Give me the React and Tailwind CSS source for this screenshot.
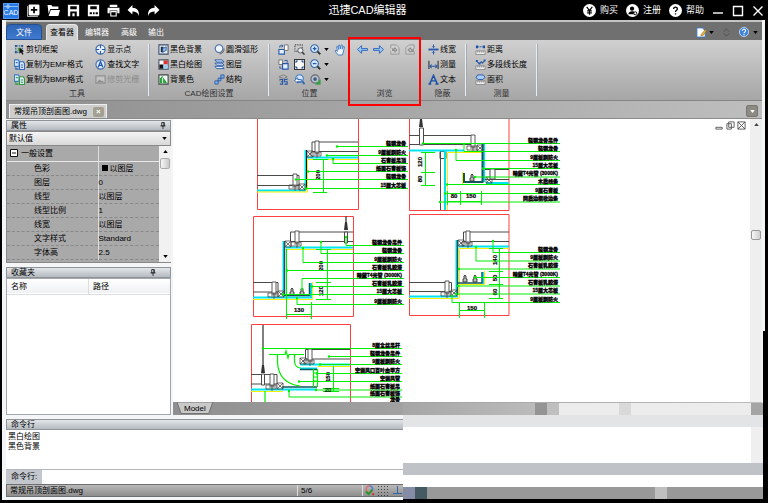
import clsx from 'clsx';

/* ---------- icons ---------- */

function Icon({ children, className = 'w-[11px] h-[11px]' }) {
  return (
    <svg viewBox="0 0 12 12" className={clsx('shrink-0', className)} fill="none" stroke="#2558a8" strokeWidth="1.2">
      {children}
    </svg>
  );
}

const Pages = ({ tint }) => (
  <Icon>
    <path d="M0.5 1h4l1 1v6h-5z" fill="#dcebfb" stroke="#3f7cc4" />
    <path d="M6 3h4l1.500 2v6.500H6z" fill="#dcebfb" stroke={tint} />
    <path d="M2 4h2M7.500 6.500H10M7.500 9H10M2 8v3h3" stroke={tint} />
  </Icon>
);

const Ruler = ({ children }) => (
  <Icon>
    <path d="M1 7.5h10v4H1z" fill="#eee" stroke="#777" strokeWidth="0.8" />
    <path d="M3 7.5v2M5 7.5v2M7 7.5v2M9 7.5v2" stroke="#777" strokeWidth="0.7" />
    {children}
  </Icon>
);

const Lens = ({ children }) => (
  <Icon>
    <circle cx="5" cy="5" r="4.200" fill="#d8e9fb" stroke="#3569ad" />
    <path d="M8 8l3.2 3.2" stroke="#333" strokeWidth="2" />
    {children}
  </Icon>
);

const ICONS = {
  frame: (
    <Icon>
      <path d="M2 2h7v7H2z" stroke="#28609c" strokeDasharray="2 1" />
      <path d="M1 1h2v2H1zM8 1h2v2H8zM1 8h2v2H1z" fill="#1c4f94" stroke="none" />
      <path d="M4 4h4v4H4z" fill="#56a64c" stroke="none" />
      <path d="M6 4l5 4-2 .4 1.4 2.6-1.4.6-1.3-2.5L6 10.500z" fill="#111" stroke="none" />
    </Icon>
  ),
  emf: <Pages tint="#2f66b8" />,
  bmp: <Pages tint="#2f9a3d" />,
  point: (
    <Icon>
      <circle cx="6" cy="6" r="5" fill="#eaf2fc" stroke="#456ea8" />
      <path d="M6 1v3.500M6 7.500V11M1 6h3.500M7.500 6H11" />
    </Icon>
  ),
  findText: (
    <Icon>
      <circle cx="6" cy="6" r="5" fill="#dcebfb" stroke="#456ea8" />
      <path d="M3.500 9L6 2.800 8.500 9M4.500 7h3" strokeWidth="1.400" />
    </Icon>
  ),
  raster: (
    <Icon>
      <path d="M1 2h10v8H1z" fill="#c4c4c4" stroke="#8e8e8e" />
      <path d="M2 9l3-3 2 2 1-1 2 2z" fill="#8a8a8a" stroke="none" />
    </Icon>
  ),
  blackBg: (
    <Icon>
      <path d="M1 1h10v10H1z" fill="#e8f1fb" stroke="#3c4f6b" />
      <path d="M3 3h3v6H3z" fill="#1b2c47" stroke="none" />
      <path d="M5 9V5l4-2v4z" fill="#8fb9ea" stroke="#234a80" strokeWidth="0.800" />
    </Icon>
  ),
  blackWhite: (
    <Icon>
      <path d="M1 1h10v10H1z" fill="#fff" stroke="#456" />
      <path d="M6 1.500h4.500V6H6z" fill="#d33" stroke="none" />
      <path d="M1.500 6H6v4.500H1.500z" fill="#111" stroke="none" />
      <path d="M6 6h4.500v4.500H6z" fill="#9fd0f5" stroke="none" />
    </Icon>
  ),
  bgColor: (
    <Icon>
      <path d="M1 1h10v10H1z" fill="#eff7ff" stroke="#444" />
      <path d="M2 10V5l3-3 5 8z" fill="#2fa23c" stroke="none" />
      <path d="M5 3l5 5M5 4v6" stroke="#fff" strokeWidth="0.900" />
    </Icon>
  ),
  arc: (
    <Icon>
      <circle cx="5.500" cy="5" r="4.200" fill="#f2f7fd" stroke="#456ea8" />
      <path d="M11 5a6 6 0 01-5 6" stroke="#777" />
    </Icon>
  ),
  layers: (
    <Icon>
      <path d="M1 1h8l2 2.300H3zM1 4.500h8l2 2.300H3zM1 8h8l2 2.500H3z" fill="#e2effc" strokeWidth="1" />
    </Icon>
  ),
  structure: (
    <Icon>
      <path d="M3 9l6-6" />
      <path d="M7.500 1H11v3.500H7.500zM1 7.500h3.500V11H1zM4.500 4.500h3v3h-3z" fill="#7eb0ea" strokeWidth="0.900" />
    </Icon>
  ),
  rotL: (
    <Icon>
      <path d="M1 6h6v5H1z" fill="#e4f0fd" />
      <path d="M7 1h4v6H7z" fill="#fafafa" stroke="#666" strokeWidth="0.900" />
      <path d="M2 4V2h3M4 0.800L5.500 2 4 3.500" strokeWidth="1" />
    </Icon>
  ),
  rotR: (
    <Icon>
      <path d="M1 1h4v5H1z" fill="#fafafa" stroke="#666" strokeWidth="0.900" />
      <path d="M5 5h6v6H5z" fill="#e4f0fd" />
      <path d="M7 1.500h3V4M2 8v2h2" strokeWidth="1" />
    </Icon>
  ),
  view35: (
    <Icon>
      <path d="M1 3l5-2 4 2-4 2zM2 5v3M10 4v3" stroke="#777" strokeWidth="0.900" />
      <path d="M2 6h3v5H2M3 8.500h2M10 6H7v2.500h3V11H7" />
    </Icon>
  ),
  zoomWin: (
    <Icon>
      <path d="M1 1h8v7H1z" stroke="#555" strokeDasharray="1.500 1" />
      <circle cx="7" cy="7" r="2.800" fill="#e4eefa" stroke="#555" strokeWidth="1" />
      <path d="M9 9l2.500 2.500" stroke="#333" strokeWidth="1.600" />
    </Icon>
  ),
  fit: (
    <Icon>
      <path d="M0.500 0.500h11v11H0.500z" fill="#f7f7f7" stroke="#333" />
      <path d="M2 4V2h2zM8 2h2v2zM2 8v2h2zM10 8v2H8z" fill="#1c4f94" stroke="#1c4f94" strokeWidth="0.600" />
    </Icon>
  ),
  zoomPrev: (
    <Icon>
      <circle cx="6" cy="5" r="4.200" fill="#d8e9fb" stroke="#3f7cc4" />
      <path d="M9 8l2.500 3" stroke="#3569ad" strokeWidth="2" />
      <path d="M1 7l3-3v2h4v2H4v2z" fill="#fff" strokeWidth="0.900" />
    </Icon>
  ),
  zoomIn: <Lens><path d="M3 5h4M5 3v4" strokeWidth="1.400" /></Lens>,
  zoomOut: <Lens><path d="M3 5h4" strokeWidth="1.400" /></Lens>,
  zoomAll: (
    <Icon>
      <circle cx="5.500" cy="5.500" r="4.500" fill="#b9c4cc" stroke="#667" />
      <circle cx="5.500" cy="5.500" r="2" fill="#3c5c86" stroke="none" />
      <path d="M7 11l4-4v4z" fill="#35a43f" stroke="#35a43f" />
    </Icon>
  ),
  hand: (
    <Icon className="w-[12px] h-[12px]">
      <path
        d="M4 11L1 7l1-.8L3.500 7.500 2.600 2.600l1-.3L4.800 5.500 4.700 1.200h1.200L6.400 5l.8-4 1.100.2-.1 4 1.300-2.800 1 .5L9.300 8l-.8 3z"
        fill="#eef5fd"
        stroke="#3f78c0"
        strokeWidth="0.900"
      />
    </Icon>
  ),
  back: (
    <Icon>
      <path d="M0.500 6L5 1.800V5h6.500v2H5v3.200z" fill="#9cc6f3" stroke="#2c66b8" strokeWidth="1" />
    </Icon>
  ),
  forward: (
    <Icon>
      <path d="M11.500 6L7 1.800V5H0.500v2H7v3.200z" fill="#9cc6f3" stroke="#2c66b8" strokeWidth="1" />
    </Icon>
  ),
  turnL: (
    <Icon>
      <path d="M2 5V1h6l3 3v7H2V8" fill="#cfcfcf" stroke="#929292" strokeWidth="0.900" />
      <path d="M6 9l2.500-2.500L6.500 4.500 4 7M4 4.500V7h2.500" stroke="#8c8c8c" />
    </Icon>
  ),
  turnR: (
    <Icon>
      <path d="M10 5V1H4L1 4v7h9V8" fill="#cfcfcf" stroke="#929292" strokeWidth="0.900" />
      <path d="M6 9L3.500 6.500l2-2L9 8M9 5v3H6" stroke="#8c8c8c" />
    </Icon>
  ),
  lineWidth: (
    <Icon>
      <path d="M0.500 6h11" strokeWidth="2" />
      <path d="M6 0.500v3.500M4.500 2.500L6 4l1.500-1.500M6 11.500V8M4.500 9.500L6 8l1.500 1.500" strokeWidth="1" />
    </Icon>
  ),
  measure: (
    <Icon>
      <path d="M1 2v9M11 2v9" stroke="#333" />
      <path d="M2 8h8M4 6L2 8l2 2M8 6l2 2-2 2" strokeWidth="1.100" />
    </Icon>
  ),
  text: (
    <Icon>
      <path d="M2 10.500L6 1.500l4 9M3.500 7.500h5M0.500 11h3M8 11h3.500" stroke="#1d52a8" strokeWidth="1.600" />
    </Icon>
  ),
  distance: (
    <Ruler>
      <path d="M2 3h8" strokeDasharray="2 1" />
      <path d="M1 1.500h2.500v3H1zM8.500 1.500H11v3H8.500z" fill="#1d52a8" stroke="none" />
    </Ruler>
  ),
  polyline: (
    <Ruler>
      <path d="M1.500 2l3 3L7 3l1 1.500 3-3" />
      <path d="M1 1h2v2H1zM4 4h2v2H4zM9.500 0.500h2v2h-2z" fill="#1d52a8" stroke="none" />
    </Ruler>
  ),
  area: (
    <Ruler>
      <path d="M1 4l2-3h6l2 2.500L8.500 6h-5z" fill="#a9cdf4" strokeWidth="1" />
    </Ruler>
  ),
};

const QUICK = [
  {
    name: '新建',
    art: (
      <>
        <rect x="1.500" y="0.500" width="10" height="10" rx="1" fill="#fff" />
        <path d="M6.500 2.500v6M3.500 5.500h6" stroke="#000" strokeWidth="1.600" />
        <path d="M0.500 2v9.500H10" stroke="#bbb" strokeWidth="0.900" fill="none" />
      </>
    ),
  },
  { name: '打开', art: <path d="M0.500 1H4l1 1.200h5.500v2.300H3L1.500 9zM3.500 5.500H12L10.500 11H1.500z" fill="#fff" /> },
  {
    name: '保存',
    art: <path d="M0.800.8h10.400v10.400H.8zM3 2v2.800h6V2zM3 7v4.200h2V8.500h2v2.700h2V7z" fill="#fff" fillRule="evenodd" />,
  },
  {
    name: '另存为',
    art: (
      <>
        <path d="M0.800.8h10.400v10.400H.8zM3 2v2.800h6V2z" fill="#fff" fillRule="evenodd" />
        <path d="M2.500 8.500h2M5.500 8.500h1.500M8 8.500h2" stroke="#000" strokeWidth="2" />
      </>
    ),
  },
  {
    name: '打印',
    art: (
      <>
        <path d="M2.500.8h7v2h-7zM0.500 3.500h11v5H9.500V6h-7v2.500h-2z" fill="#fff" />
        <path d="M3.500 7h5v4h-5z" stroke="#fff" fill="none" />
      </>
    ),
  },
  { name: '撤销', art: <path d="M5 1v2.500c4 0 6.500 2.500 6 7.500-1-3-3-4-6-4v2.800L0.500 5.500z" fill="#fff" /> },
  { name: '重做', art: <path d="M7 1v2.500c-4 0-6.500 2.500-6 7.500 1-3 3-4 6-4v2.800l4.500-4.300z" fill="#fff" /> },
];

const Caret = ({ className }) => (
  <svg viewBox="0 0 6 4" className={clsx('w-[5px] h-[3px] shrink-0', className)}>
    <path d="M0 0h6L3 4z" fill="currentColor" />
  </svg>
);

const Pin = () => (
  <svg viewBox="0 0 7 8" className="w-[6px] h-[7px]" fill="none" stroke="#222">
    <path d="M2 0.500h3v4H2zM0.500 4.500h6M3.500 5v3M4.500 1v3" />
  </svg>
);

/* ---------- title bar ---------- */

function Account({ label, children }) {
  return (
    <button className="flex items-center gap-1">
      <svg viewBox="0 0 14 14" className="w-[13px] h-[13px]">
        <circle cx="7" cy="7" r="7" fill="#fff" />
        {children}
      </svg>
      <span className="text-[9px]">{label}</span>
    </button>
  );
}

function TitleBar() {
  return (
    <header className="h-5 shrink-0 flex items-center bg-black text-white pt-px">
      <div className="flex-1 flex items-center pl-[3px]">
        <div className="w-4 h-4 mr-2 bg-[#2878e6] border border-[#4f9af5] flex flex-col items-center">
          <svg viewBox="0 0 14 5" className="w-[14px] h-[5px]" fill="none" stroke="#a9cffb" strokeWidth="0.800">
            <circle cx="4" cy="2.500" r="1.500" />
            <path d="M0 2.500h14M4 0v5" />
          </svg>
          <span className="text-[7px] leading-[8px]">CAD</span>
        </div>
        <div className="flex gap-[7px]">
          {QUICK.map((q) => (
            <button key={q.name} aria-label={q.name}>
              <svg viewBox="0 0 12 12" className="w-[13px] h-[13px]">{q.art}</svg>
            </button>
          ))}
        </div>
      </div>
      <h1 className="text-[11px] pr-8">迅捷CAD编辑器</h1>
      <div className="flex-1 flex items-center justify-end gap-2 pr-1">
        <Account label="购买">
          <path d="M4 3l3 4 3-4M7 7v4.500M4.500 7.500h5M4.500 9.500h5" stroke="#000" strokeWidth="1.300" fill="none" />
        </Account>
        <Account label="注册">
          <circle cx="6.500" cy="5" r="2.300" fill="#000" />
          <path d="M2.500 11c0-4 6-4 7-2v2z" fill="#000" />
          <circle cx="10" cy="10" r="1.600" fill="#fff" stroke="#000" />
        </Account>
        <Account label="帮助">
          <path d="M5 5.500c0-3 4.300-2.500 4 0-.2 1.300-2 1.300-2 3M7 10v1.300" stroke="#000" strokeWidth="1.400" fill="none" />
        </Account>
        <div className="flex gap-2">
          {['M1 8h10', 'M1.500 1.500h9v9h-9z', 'M1.500 1.500l9 9M10.500 1.500l-9 9'].map((d, i) => (
            <button key={d} aria-label={['最小化', '最大化', '关闭'][i]}>
              <svg viewBox="0 0 12 12" className="w-3 h-3" fill="none" stroke="#fff" strokeWidth="1.400">
                <path d={d} />
              </svg>
            </button>
          ))}
        </div>
      </div>
    </header>
  );
}

/* ---------- ribbon ---------- */

function TabRow() {
  return (
    <nav className="h-5 shrink-0 flex items-end bg-[#707070] border-t-2 border-[#c4c4c4] text-white">
      <button className="w-9 h-4 rounded-t-sm bg-linear-to-b from-[#2f63b4] to-[#3f7bd0] border border-[#234f93]">文件</button>
      <button className="w-8 h-4 ml-1 mr-1 rounded-t-sm bg-[#cfcfcf] border border-b-0 border-[#e8e8e8] text-black">查看器</button>
      <button className="h-4 px-[3px]">编辑器</button>
      <button className="h-4 px-[9px]">高级</button>
      <button className="h-4 px-[2px]">输出</button>
      <div className="ml-auto flex items-center h-4 gap-1 pr-1 text-black">
        <button className="flex items-center gap-[2px]" aria-label="样式">
          <svg viewBox="0 0 12 12" className="w-[11px] h-[11px]">
            <path d="M1 1h6l3 3v7H1z" fill="#fff" stroke="#3b78c6" />
            <path d="M5 9l5-6 1.500 1.200L7 10z" fill="#f0b52e" stroke="#85601a" strokeWidth="0.600" />
          </svg>
          <Caret />
        </button>
        <svg viewBox="0 0 10 10" className="w-[9px] h-[9px] mx-1" fill="none" stroke="#4d4d4d">
          <path d="M2 4l3-3 3 3M2 6l3 3 3-3" />
        </svg>
        <button className="flex items-center gap-1" aria-label="帮助主题">
          <svg viewBox="0 0 12 12" className="w-[10px] h-[10px]">
            <circle cx="6" cy="6" r="5.500" fill="#3d82dc" stroke="#cfe2fa" />
            <path d="M4 4.500c0-2.500 4-2.300 4 0C8 6 6 6 6 7.500M6 8.500v1.300" stroke="#fff" strokeWidth="1.300" fill="none" />
          </svg>
          <Caret />
        </button>
      </div>
    </nav>
  );
}

function Tool({ icon, label, caret, disabled }) {
  return (
    <button disabled={disabled} aria-label={label || icon} className="h-[15px] flex items-center gap-px text-left whitespace-nowrap disabled:text-[#8c8c8c]">
      {ICONS[icon]}
      {label && <span>{label}</span>}
      {caret && <Caret className="ml-[2px]" />}
    </button>
  );
}

function Group({ title, className, gridClass, children }) {
  return (
    <section className={clsx('shrink-0 flex flex-col pt-[2px]', className)}>
      <div className={clsx('grid grid-flow-col grid-rows-3 h-[45px] justify-start', gridClass)}>{children}</div>
      <h2 className="mt-[2px] text-center text-[#333] leading-[10px]">{title}</h2>
    </section>
  );
}

const Divider = () => <div className="w-[2px] my-1 shrink-0 bg-[#e9edf2] border-r border-[#a3a9b1]" />;

function Ribbon() {
  return (
    <div className="h-[61px] shrink-0 flex bg-linear-to-b from-[#d0d0d0] to-[#a6a6a6] border-b border-[#858585]">
      <Group title="工具" className="w-[142px]" gridClass="pl-2 gap-x-[12px]">
        <Tool icon="frame" label="剪切框架" />
        <Tool icon="emf" label="复制为EMF格式" />
        <Tool icon="bmp" label="复制为BMP格式" />
        <Tool icon="point" label="显示点" />
        <Tool icon="findText" label="查找文字" />
        <Tool icon="raster" label="修剪光栅" disabled />
      </Group>
      <Divider />
      <Group title="CAD绘图设置" className="w-[118px]" gridClass="pl-2 gap-x-[12px]">
        <Tool icon="blackBg" label="黑色背景" />
        <Tool icon="blackWhite" label="黑白绘图" />
        <Tool icon="bgColor" label="背景色" />
        <Tool icon="arc" label="圆滑弧形" />
        <Tool icon="layers" label="图层" />
        <Tool icon="structure" label="结构" />
      </Group>
      <Divider />
      <Group title="位置" className="w-[79px]" gridClass="pl-2 gap-x-[5px]">
        <Tool icon="rotL" />
        <Tool icon="rotR" />
        <Tool icon="view35" />
        <Tool icon="zoomWin" />
        <Tool icon="fit" />
        <Tool icon="zoomPrev" />
        <Tool icon="zoomIn" caret />
        <Tool icon="zoomOut" caret />
        <Tool icon="zoomAll" caret />
        <Tool icon="hand" />
      </Group>
      <div className="relative shrink-0 flex">
        <Group title="浏览" className="w-[71px]" gridClass="pl-2 gap-x-[5px]">
          <Tool icon="back" />
          <span className="row-span-2" />
          <Tool icon="forward" />
          <span className="row-span-2" />
          <Tool icon="turnL" disabled />
          <span className="row-span-2" />
          <Tool icon="turnR" disabled />
        </Group>
        <div className="absolute -left-px -right-px -top-[3px] h-[69px] border-2 border-[#f00]" />
      </div>
      <Group title="隐蔽" className="w-[45px]" gridClass="pl-2">
        <Tool icon="lineWidth" label="线宽" />
        <Tool icon="measure" label="测量" />
        <Tool icon="text" label="文本" />
      </Group>
      <Divider />
      <Group title="测量" className="w-[69px]" gridClass="pl-2">
        <Tool icon="distance" label="距离" />
        <Tool icon="polyline" label="多段线长度" />
        <Tool icon="area" label="面积" />
      </Group>
      <Divider />
    </div>
  );
}

function DocTabs() {
  return (
    <div className="h-[18px] shrink-0 flex items-end justify-between pl-[3px] pr-1 bg-linear-to-r from-[#8f8f8f] to-[#bebebe] border-b border-[#8b8b8b]">
      <div className="h-[14px] flex items-center gap-[6px] pl-1 pr-[2px] bg-[#cdcdcd] border border-b-0 border-[#eee]">
        <span>常规吊顶剖面图.dwg</span>
        <button aria-label="关闭文档" className="w-[11px] h-[10px] bg-[#a3a091] rounded-[2px] text-white font-bold leading-[9px]">×</button>
      </div>
      <button aria-label="文档列表" className="w-3 h-3 mb-px rounded-[2px] bg-[#8b8b83] border border-[#77776f] flex items-center justify-center text-white">
        <Caret />
      </button>
    </div>
  );
}

/* ---------- side panels ---------- */

function PanelHead({ title, pin, className }) {
  return (
    <div className={clsx('h-[11px] shrink-0 flex items-center justify-between pl-1 bg-linear-to-b from-[#e3e6e9] to-[#b4bac0] border border-[#8f9499] leading-[9px]', className)}>
      <h2>{title}</h2>
      {pin && <Pin />}
    </div>
  );
}

const PROPS = [
  ['色彩', '以图层'],
  ['图层', '0'],
  ['线型', '以图层'],
  ['线型比例', '1'],
  ['线宽', '以图层'],
  ['文字样式', 'Standard'],
  ['字体高', '2.5'],
];

function Properties() {
  return (
    <section className="shrink-0 pt-px">
      <PanelHead title="属性" pin className="pr-1" />
      <div className="relative">
        <select aria-label="对象" className="block w-full h-[15px] pl-[2px] appearance-none bg-linear-to-b from-[#f5f5f5] to-[#d9d9d9] border border-[#888]">
          <option>默认值</option>
        </select>
        <Caret className="absolute right-1 top-[6px] pointer-events-none" />
      </div>
      <div className="flex h-[117px] border-b border-l border-[#888]">
        <div className="flex-1 bg-[#a9a9a9]">
          <table className="w-full table-fixed border-collapse">
            <colgroup>
              <col className="w-[91px]" />
              <col />
            </colgroup>
            <tbody>
              <tr className="h-[15px] border-b border-[#e8e8e8]">
                <th className="p-0 pl-[3px] border-r border-[#ddd] text-left font-normal">
                  <span className="flex items-center gap-[3px]">
                    <svg viewBox="0 0 8 8" className="w-2 h-2" stroke="#111">
                      <path d="M0.500 0.500h7v7h-7zM2 4h4" fill="#fff" />
                    </svg>
                    一般设置
                  </span>
                </th>
                <td />
              </tr>
              {PROPS.map(([name, value], i) => (
                <tr key={name} className="h-[14px] border-b border-dashed border-[#888]">
                  <th className="p-0 pl-[27px] border-r border-solid border-r-[#ddd] text-left font-normal">{name}</th>
                  <td className="p-0">
                    <span className="flex items-center gap-[2px]">
                      {i === 0 && <i className="w-[6px] h-[6px] ml-[3px] bg-black" />}
                      {value}
                    </span>
                  </td>
                </tr>
              ))}
            </tbody>
          </table>
        </div>
        <div className="w-3 bg-[#f1f1f1] flex flex-col items-center py-1">
          <Caret className="rotate-180" />
          <div className="mt-[5px] w-[10px] h-[11px] rounded-[2px] bg-linear-to-r from-[#f6f6f6] to-[#c9c9c9] border border-[#aaa]" />
          <Caret className="mt-auto" />
        </div>
      </div>
    </section>
  );
}

function Favourites() {
  return (
    <section className="flex-1 min-h-0 flex flex-col">
      <PanelHead title="收藏夹" pin className="pr-[14px]" />
      <div className="flex-1 bg-white border border-[#a2a8ad]">
        <table className="w-full table-fixed">
          <thead>
            <tr className="h-[15px] bg-linear-to-b from-white to-[#eef0f2] border-b border-[#dcdfe2]">
              <th className="p-0 pl-1 text-left font-normal border-r border-[#dcdfe2]">名称</th>
              <th className="p-0 pl-1 text-left font-normal">路径</th>
            </tr>
          </thead>
        </table>
      </div>
    </section>
  );
}

/* ---------- drawing ---------- */

const GREEN = '#00ee00';
const CYAN = '#00e4f2';
const YELLOW = '#f4f000';
const GREY = '#4a4a4a';

// leader: [start x, line y, y of the point it drops from (or null), label]
function Leaders({ end, items }) {
  return items.map(([x, y, from, label]) => (
    <g key={y}>
      <path d={`M${x} ${from ?? y}V${y}H${end}`} stroke={GREEN} fill="none" />
      <circle cx={x} cy={from ?? y} r="1.200" fill={GREEN} />
      <text x={end - 2} y={y - 2} textAnchor="end" fontSize="5" fontWeight="900" fill="#000" stroke="#000" strokeWidth="0.300">
        {label}
      </text>
    </g>
  ));
}

function Dim({ x, y, vertical, children }) {
  return (
    <text
      x={x}
      y={y}
      fontSize="6"
      fontWeight="bold"
      textAnchor="middle"
      dominantBaseline="central"
      stroke="#000"
      strokeWidth="0.200"
      transform={vertical ? `rotate(-90 ${x} ${y})` : undefined}
    >
      {children}
    </text>
  );
}

const Line = ({ d, c = GREY, w = 1 }) => <path d={d} stroke={c} strokeWidth={w} fill="none" />;

// timber batten, section cross
const Batten = ({ x, y }) => <Line d={`M${x} ${y}h6v6h-6zl6 6m0 -6l-6 6`} w={0.8} />;

// hanger post with its clip
const Post = ({ x, y }) => (
  <>
    <path d={`M${x} ${y}h4v12h-4z`} fill="#fff" stroke={GREY} strokeWidth="0.900" />
    <Line d={`M${x - 4} ${y + 11}h10v4h-10zM${x - 1} ${y + 13}h6M${x + 2} ${y + 11}v6`} w={0.8} />
  </>
);

const Lamp = ({ x, y }) => (
  <path d={`M${x - 2} ${y + 8}v-3h1v-3l1-1 1 1v3h1v3z`} fill="#bbb" stroke="#333" strokeWidth="0.900" />
);

const Rod = ({ x, y, h }) => (
  <>
    <Line d={`M${x} ${y}v${h}`} w={1.4} />
    <path d={`M${x - 2} ${y + h}l1-8h2l1 8z`} fill="#333" />
  </>
);

function Drawing() {
  return (
    <svg viewBox="173 119 577 283" className="absolute left-0 top-0 w-[577px] h-[283px]" role="img" aria-label="常规吊顶剖面图">
      {/* top left */}
      <Line d="M257.500 119V209.500H358.500V119" c="#ff4040" />
      <Line d="M358 142H312V152M358 151.500H312M257 175.500H299V185.500H257" />
      <Line d="M307 157.500H358M305.500 150V190M257 190.500H306" c={CYAN} w={2} />
      <Line d="M307.500 192H257M307.500 192V159.500H358" c={YELLOW} />
      <Line d="M306.500 150V188" c="#111" />
      <Batten x={307} y={151} />
      <Batten x={299} y={184} />
      <Post x={315} y={141} />
      <Post x={293} y={174} />
      <Line d="M323.500 159V193M313 159.500H328M313 192.500H327" c={GREEN} />
      <Dim x={318} y={175} vertical>200</Dim>
      <Leaders
        end={408}
        items={[
          [337, 146.5, null, '轻钢龙骨'],
          [327, 155.5, null, '9厘板刷防火'],
          [333, 163.5, 159, '石膏板吊顶'],
          [308, 171.5, null, '纸面石膏板饰'],
          [296, 179.5, null, '轻钢龙骨'],
          [306, 188.5, null, '15厘大芯板'],
        ]}
      />

      {/* top right */}
      <Line d="M409.500 119V210.500H509V119" c="#ff4040" />
      <Line d="M409 135.500H471M409 144.500H471M509 169.500H485M509 179.500H485M440.500 151V210M440 151.500h6v7h-6z" />
      <Line d="M409 150.500H464M484 144V182M445 151V210M486 183H509" c={CYAN} w={2} />
      <Line d="M447.500 210V152.500H482M462.500 172V184.500" c={YELLOW} />
      <Line d="M482.500 144V182H464V173" c="#115560" w={2} />
      <Rod x={421} y={119} h={8} />
      <path d="M419.500 128h4v17h-4z" fill="#fff" stroke={GREY} />
      <Batten x={477} y={145} />
      <Batten x={486} y={177} />
      <Post x={471} y={135} />
      <path d="M490 169h5v10h-5z" fill="#fff" stroke={GREY} />
      <Lamp x={472} y={173} />
      <Line
        d="M425.500 152V186M421 152.500H435M421 172.500H435M421 185.500H435M447 201.500H482M447.500 191V205M460.500 191V205M481.500 191V205"
        c={GREEN}
      />
      <Dim x={420} y={162} vertical>120</Dim>
      <Dim x={420} y={179} vertical>80</Dim>
      <Dim x={454} y={196}>80</Dim>
      <Dim x={471} y={196}>150</Dim>
      <Leaders
        end={560}
        items={[
          [423, 143.5, null, '轻钢龙骨吊件'],
          [464, 151.5, 144, '轻钢龙骨'],
          [456, 160.5, 150, '9厘板刷防火'],
          [483, 168.5, null, '15厘大芯板'],
          [475, 177, null, '暗藏T4光管 (3000K)'],
          [447, 184.5, null, '木质线条'],
          [445, 193.5, null, '9厘石膏板'],
          [440, 202, null, '同质边框收边条'],
        ]}
      />

      {/* middle left */}
      <Line d="M253.500 216.500H353.500V316.500H253.500z" c="#ff4040" />
      <Line d="M353 232H290.500V242M353 241.500H290M253 282.500H278V292H253" />
      <Line d="M286 247.500H353M283.500 241V295M253 297.500H312M311 283V297" c={CYAN} w={2} />
      <Line d="M286.500 249.500H353M253 299.500H312.500V282" c={YELLOW} />
      <Line d="M284.500 241V295.500H309.500V283" c="#115560" w={1.5} />
      <Rod x={346} y={216} h={14} />
      <path d="M344.500 232h3v11h-3z" fill="#fff" stroke={GREY} />
      <Batten x={285} y={241} />
      <Batten x={278} y={291} />
      <Post x={295} y={231} />
      <Post x={272} y={282} />
      <Lamp x={292} y={287} />
      <Lamp x={302} y={287} />
      <Line
        d="M327.500 249V300M316 249.500H331M316 282.500H331M316 299.500H331M287 314.500H312M286.500 249V319M311.500 302V319"
        c={GREEN}
      />
      <Dim x={321} y={266} vertical>200</Dim>
      <Dim x={321} y={291} vertical>120</Dim>
      <Dim x={299} y={310}>130</Dim>
      <Leaders
        end={404}
        items={[
          [346, 245.5, 237, '轻钢龙骨吊件'],
          [321, 253.5, 242, '轻钢龙骨'],
          [303, 262.5, 248, '9厘板刷防火'],
          [287, 270.5, null, '石膏板乳胶漆'],
          [302, 278.5, 289, '暗藏T4光管 (3000K)'],
          [312, 286.5, null, '石膏板乳胶漆'],
          [283, 294.5, null, '15厘大芯板'],
          [297, 304.5, 298, '9厘板刷防火'],
        ]}
      />

      {/* middle right */}
      <Line d="M409.500 214.500H509V315.500H409.500z" c="#ff4040" />
      <Line d="M509 232H463.500V241.500H509M409 282.500H451.500V291.500H409" />
      <Line d="M459 246.500H509M456.500 240V295M409 296.500H458M483.500 272V284" c={CYAN} w={2} />
      <Line d="M459.500 298.500H409M459.500 298V248.500H509M459 284.500H484.500V271" c={YELLOW} />
      <Line d="M457.500 240V295M458 283H482V272" c="#115560" w={1.5} />
      <Batten x={458} y={240} />
      <Batten x={451} y={290} />
      <Post x={466} y={231} />
      <Post x={445} y={281} />
      <Lamp x={465} y={274} />
      <Lamp x={475} y={274} />
      <Line
        d="M499.500 248V299M489 248.500H503M489 271.500H503M489 284.500H503M489 298.500H503M459 310.500H485M459.500 302V318M484.500 302V318"
        c={GREEN}
      />
      <Dim x={495} y={260} vertical>140</Dim>
      <Dim x={495} y={278} vertical>50</Dim>
      <Dim x={495} y={292} vertical>60</Dim>
      <Dim x={472} y={308}>150</Dim>
      <Leaders
        end={560}
        items={[
          [493, 252.5, 241, '轻钢龙骨'],
          [476, 261, 247, '9厘板刷防火'],
          [459, 269, null, '石膏板乳胶漆'],
          [475, 277.5, null, '暗藏T4光管 (3000K)'],
          [458, 286, null, '石膏板乳胶漆'],
          [456, 294, null, '15厘大芯板'],
          [452, 302.5, 296, '9厘板刷防火'],
        ]}
      />

      {/* bottom left */}
      <Line d="M251.500 402V324.500H350.500V402" c="#ff4040" />
      <Line d="M350 349.500H305.500V359H350M251 374.500H277V384H251" />
      <Line d="M300 364.500H350M251 389.500H317M300 368.500H317" c={CYAN} w={2} />
      <Line d="M318 366.500H350M251 391.500H283" c={YELLOW} />
      <Line d="M300 369.500H317M282 387H317" c="#115560" w={1.5} />
      <Rod x={263} y={325} h={48} />
      <path d="M261.500 374h3v11h-3z" fill="#fff" stroke={GREY} />
      <Batten x={300} y={358} />
      <Batten x={277} y={383} />
      <Post x={308} y={349} />
      <Post x={270} y={374} />
      <Line
        d="M269 354.500H285L286 351 288 358 289 354.500H304M277.500 354V362C278 376 286 384 300 386M294.500 354V362Q295 367 300 368M313.500 369V387M317.500 369V387M314 373H317M314 377H317M314 381H317M265 391V402"
        c={GREEN}
        w={1.2}
      />
      <Line d="M333.500 366V392M323 388.500H339M323 391.500H339" c={GREEN} />
      <Dim x={328} y={377} vertical>150</Dim>
      <Dim x={328} y={390}>20</Dim>
      <Leaders
        end={402}
        items={[
          [263, 348.5, null, '8厘全丝吊杆'],
          [329, 356.5, null, '轻钢龙骨吊件'],
          [320, 364.5, null, '9厘板刷防火'],
          [317, 373.5, null, '空调风口百叶由甲方'],
          [299, 381.5, null, '空调风管'],
          [316, 390, null, '纸面石膏板吊'],
          [289, 397, 391, '纸面石膏板饰'],
          [265, 403, null, '龙骨'],
        ]}
      />
    </svg>
  );
}

function Canvas() {
  return (
    <main className="flex-1 min-w-0 flex flex-col">
      <div className="flex-1 min-h-0 flex bg-white">
        <div className="relative flex-1 min-w-0 overflow-hidden">
          <Drawing />
          <div className="absolute right-1 top-[2px] flex gap-[2px]">
            {['M1 7h7v2H1z', 'M3 1h6v6H3zM1 3h5v6H1z', 'M1 1h8v8H1zM1 1l8 8M9 1L1 9'].map((d, i) => (
              <button key={d} aria-label={['最小化图纸', '还原图纸', '关闭图纸'][i]}>
                <svg viewBox="0 0 10 10" className="w-[9px] h-[9px]" fill="none" stroke="#555">
                  <path d={d} />
                </svg>
              </button>
            ))}
          </div>
        </div>
        <div className="w-3 bg-[#efefef] flex flex-col items-center py-1 text-[#444]">
          <Caret className="rotate-180" />
          <div className="mt-[104px] w-[10px] h-[10px] rounded-[2px] bg-linear-to-r from-[#f6f6f6] to-[#d0d0d0] border border-[#999]" />
        </div>
      </div>
      <div className="h-[13px] shrink-0 bg-linear-to-r from-[#8f8f8f] to-[#bebebe] pl-1">
        <button className="relative h-3 px-[7px]">
          <svg viewBox="0 0 35 12" className="absolute inset-0 w-full h-full" preserveAspectRatio="none">
            <path d="M0 0L4 11.500H31L35 0z" fill="#c9c9c9" stroke="#666" strokeWidth="0.800" />
          </svg>
          <span className="relative">Model</span>
        </button>
      </div>
    </main>
  );
}

/* ---------- bottom ---------- */

function CommandLine() {
  return (
    <section className="shrink-0 pt-px">
      <PanelHead title="命令行" />
      <div className="h-[39px] pt-[2px] pl-[2px] bg-white leading-[10px]">
        <p>黑白绘图</p>
        <p>黑色背景</p>
      </div>
      <div className="h-[15px] flex border-t border-[#b4b8bd]">
        <label htmlFor="cmd" className="w-9 pl-[5px] bg-[#c3c7cd] leading-[14px]">命令行:</label>
        <input id="cmd" className="flex-1 min-w-0 bg-white px-1 outline-none" />
      </div>
    </section>
  );
}

function StatusBar() {
  return (
    <footer className="h-[13px] shrink-0 flex items-center bg-linear-to-b from-[#b9b9b9] to-[#8e8e8e] border border-[#6f6f6f]">
      <span className="w-[290px] pl-[3px]">常规吊顶剖面图.dwg</span>
      <span className="w-[65px] h-full pl-[3px] border-l border-[#ddd] leading-[11px]">5/6</span>
      <div className="flex items-center h-full gap-[3px] pl-px border-l border-[#ddd]">
        <svg viewBox="0 0 12 12" className="w-[11px] h-[11px]" fill="none">
          <circle cx="6" cy="4.500" r="3.500" stroke="#e06a6a" strokeWidth="1.500" />
          <path d="M6 1a3.500 3.500 0 013 5" stroke="#3c8ae0" strokeWidth="1.500" />
          <path d="M2 7l3 3 4-5" stroke="#1d9a2c" strokeWidth="2" />
          <path d="M9 9h2v2H9z" fill="#d22" />
        </svg>
        <svg viewBox="0 0 11 11" className="w-[11px] h-[11px]" stroke="#444" strokeDasharray="1 2">
          <path d="M0 1.500h11M0 4.500h11M0 7.500h11M0 10.500h11" />
        </svg>
        <svg viewBox="0 0 11 11" className="w-[11px] h-[11px]" stroke="#2f66b0" fill="none">
          <path d="M5.500 1v8M1 8.500h9" />
        </svg>
      </div>
    </footer>
  );
}

function Mosaic() {
  return (
    <>
      <div className="absolute right-0 bottom-0 w-[5px] h-[172px] bg-black" />
      <div className="absolute left-[403px] right-[5px] bottom-0 flex flex-col">
        <div className="h-3 flex bg-[#ececec]">
          <div className="w-[132px] bg-linear-to-r from-[#a6a6a6] to-[#bbbbbb]" />
          <div className="w-3 bg-[#949494]" />
          <div className="w-3 bg-[#bfbfbf]" />
          <div className="w-3 ml-[60px] bg-[#d9d9d9]" />
          <div className="w-3 ml-auto bg-[#a4a4a4]" />
        </div>
        <div className="h-3 bg-[#e2e4e6]" />
        <div className="h-9 bg-white flex justify-end">
          <div className="w-3 bg-[#efefef]" />
        </div>
        <div className="h-3 bg-[#bfc3c8]" />
        <div className="h-3 bg-white" />
        <div className="h-3 flex bg-[#999]">
          <div className="w-3 bg-[#858da6]" />
          <div className="w-3 bg-[#465a62]" />
          <div className="w-3 ml-[228px] bg-[#bfbfbf]" />
        </div>
        <div className="h-1 bg-black" />
      </div>
    </>
  );
}

export default function App() {
  return (
    <div className="relative h-screen flex flex-col overflow-hidden bg-black text-black text-[8px] leading-[11px] font-['Liberation_Sans','Noto_Sans_CJK_SC',sans-serif]">
      <TitleBar />
      <div className="flex-1 min-h-0 ml-[2px] mr-[3px] mb-[3px] pb-[3px] flex flex-col bg-[#f4f5f7] border-l-4 border-r-3 border-[#f4f5f7]">
        <TabRow />
        <Ribbon />
        <DocTabs />
        <div className="flex-1 min-h-0 flex">
          <aside className="w-[165px] mr-[2px] shrink-0 flex flex-col gap-1">
            <Properties />
            <Favourites />
          </aside>
          <Canvas />
        </div>
        <div className="h-[3px] shrink-0" />
        <CommandLine />
        <StatusBar />
      </div>
      <Mosaic />
    </div>
  );
}
